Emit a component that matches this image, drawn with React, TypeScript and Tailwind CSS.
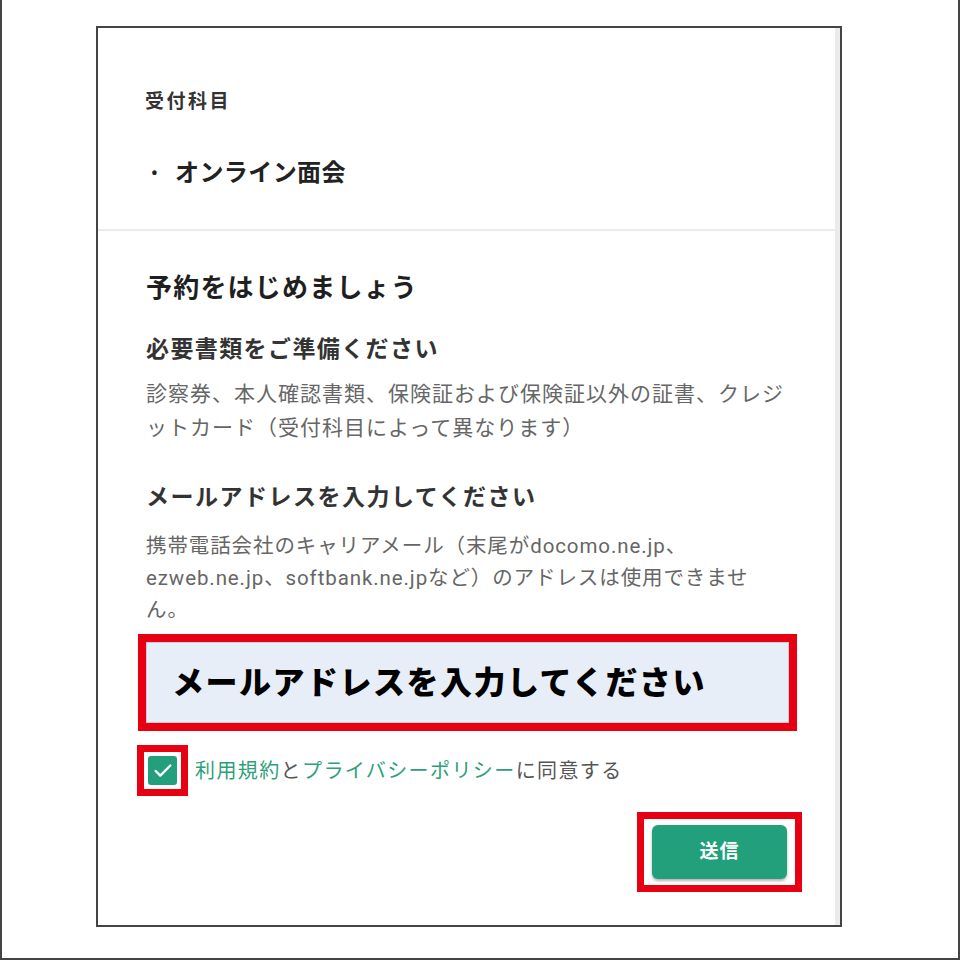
import { Check } from 'lucide-react';

const font = { fontFamily: 'Roboto, "Noto Sans CJK JP", sans-serif' };

function Section({ children, className }: { children: React.ReactNode; className?: string }) {
  return <div className={className}>{children}</div>;
}

export default function App() {
  return (
    <div
      className="w-[960px] h-[960px] bg-white border-l-2 border-r-2 border-b-2 border-[#444] overflow-hidden"
      style={font}
    >
      <div className="ml-[94px] mt-[26px] w-[746px] h-[901px] border-2 border-[#444] flex bg-white">
        <div className="flex-1 flex flex-col">
          {/* 受付科目 */}
          <Section className="h-[201px] pl-[47px]">
            <div className="mt-[59px] text-[19px] leading-[30px] font-bold tracking-[2.5px] text-[#333]">
              受付科目
            </div>
            <div className="mt-[41px] flex items-center text-[24px] leading-[30px] font-bold tracking-[0.4px] text-[#222]">
              <span className="ml-[6px] mr-[17px] text-[18px] font-black">•</span>
              <span>オンライン面会</span>
            </div>
          </Section>
          <div className="h-[2px] bg-[#ebebeb]" />

          {/* 予約 */}
          <Section className="pl-[48px] pr-[46px]">
            <div className="mt-[39px] text-[26px] leading-[36px] font-bold tracking-[1.2px] text-[#1f1f1f]">
              予約をはじめましょう
            </div>
            <div className="mt-[28px] text-[23px] leading-[32px] font-bold tracking-[1.4px] text-[#333]">
              必要書類をご準備ください
            </div>
            <p className="mt-[11px] text-[21px] leading-[34px] tracking-[1px] text-[#666]">
              診察券、本人確認書類、保険証および保険証以外の証書、クレジットカード（受付科目によって異なります）
            </p>
            <div className="mt-[37px] text-[23px] leading-[32px] font-bold tracking-[1.5px] text-[#333]">
              メールアドレスを入力してください
            </div>
            <p className="mt-[16px] text-[20.5px] leading-[32px] tracking-[0.9px] text-[#666]">
              携帯電話会社のキャリアメール（末尾がdocomo.ne.jp、ezweb.ne.jp、softbank.ne.jpなど）のアドレスは使用できません。
            </p>

            <div className="mt-[8px] -mx-[8px] border-[8px] border-[#e60012]">
              <div className="h-[81px] bg-[#e8eef8] border border-[#c9ced6] flex items-center pl-[25px] text-[32px] font-black tracking-[1.5px] text-black">
                メールアドレスを入力してください
              </div>
            </div>

            <div className="mt-[14px] flex items-center">
              <div className="-ml-[9px] border-[7px] border-[#e60012] p-[4px] bg-white">
                <div className="w-[29px] h-[29px] rounded-[3px] bg-[#23a07b] flex items-center justify-center">
                  <Check className="text-white" size={22} strokeWidth={2.6} />
                </div>
              </div>
              <div className="ml-[7px] text-[20px] leading-[28px] tracking-[1.4px] text-[#555]">
                <span className="text-[#2e9f7a]">利用規約</span>と
                <span className="text-[#2e9f7a]">プライバシーポリシー</span>に同意する
              </div>
            </div>

            <div className="mt-[16px] flex justify-end">
              <div className="-mr-[13px] border-[7px] border-[#e60012] px-[8px] py-[6px] bg-white">
                <button className="w-[135px] h-[54px] rounded-[6px] bg-[#22a07b] shadow-[0_2px_3px_rgba(0,0,0,0.3)] text-white text-[19px] font-bold tracking-[1px]">
                  送信
                </button>
              </div>
            </div>
          </Section>
        </div>
        <div className="w-[5px] bg-[#ebebeb]" />
      </div>
    </div>
  );
}
